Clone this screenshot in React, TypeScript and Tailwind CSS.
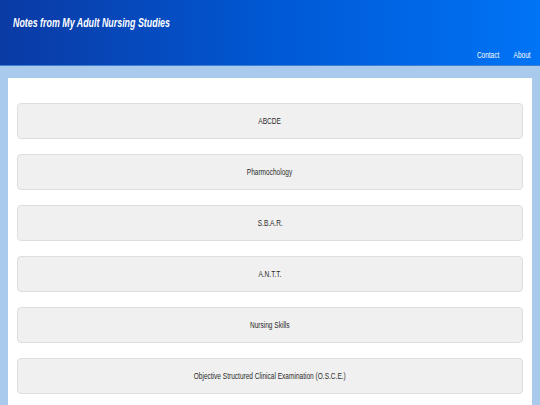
import React from 'react';

const topics = [
  'ABCDE',
  'Pharmochology',
  'S.B.A.R.',
  'A.N.T.T.',
  'Nursing Skills',
  'Objective Structured Clinical Examination (O.S.C.E.)',
];

const App: React.FC = () => {
  return (
    <div className="min-h-screen bg-[#a9caed] font-['Liberation_Sans',Arial,sans-serif]">
      <header className="h-[66px] bg-gradient-to-r from-[#0a3aa4] via-[#0058d4] to-[#0074f6] border-b border-[#3d7fd0] flex flex-col justify-between pl-[13px] pr-[9px] pt-[14px] pb-[3px]">
        <h1 className="text-white text-[12.5px] font-bold italic">
          <span className="inline-block scale-x-[0.71] origin-left whitespace-nowrap">Notes from My Adult Nursing Studies</span>
        </h1>
        <nav className="flex justify-end text-white text-[9px]">
          <div className="flex gap-[20px] scale-x-[0.72] origin-right">
            <a href="#">Contact</a>
            <a href="#">About</a>
          </div>
        </nav>
      </header>
      <main className="mx-[8px] mt-[12px] bg-white px-[9px] pt-[25px] pb-[12px] flex flex-col gap-[15px]">
        {topics.map((t) => (
          <button
            key={t}
            className="h-[36px] w-full bg-[#f0f0f0] border border-[#dedede] rounded-[4px] text-[#2a2a2a] text-[8.5px] flex items-center justify-center"
          >
            <span className="inline-block scale-x-[0.77] whitespace-nowrap">{t}</span>
          </button>
        ))}
      </main>
    </div>
  );
};

export default App;
